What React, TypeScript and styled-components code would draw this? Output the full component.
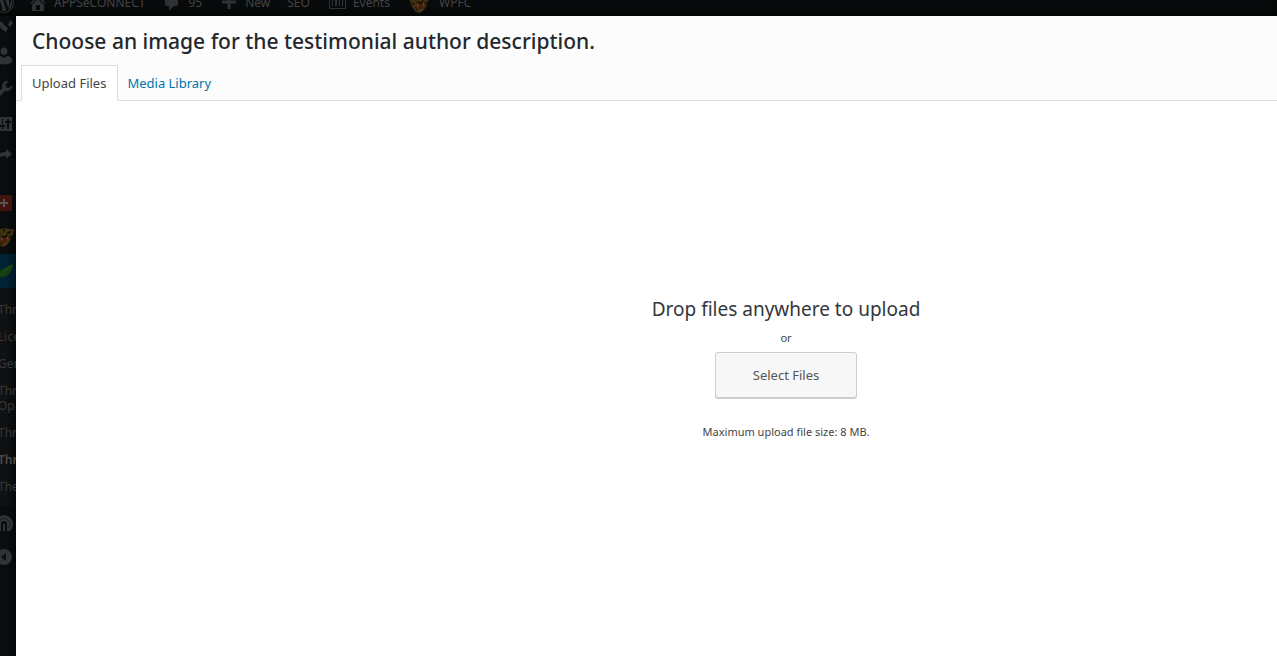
import React from "react";
import styled, { createGlobalStyle, css } from "styled-components";

const GlobalStyle = createGlobalStyle`
  * { box-sizing: border-box; }
  html, body { margin: 0; height: 100%; }
  #root { height: 100%; }
  body {
    background: #090b0c;
    color: #444;
    font-family: "Segoe UI", "Noto Sans", sans-serif;
    font-size: 13px;
    line-height: 20px;
  }
`;

const Page = styled.div`
  display: grid;
  grid-template-rows: 16px minmax(0, 1fr);
  height: 100vh;
  min-height: 600px;
  overflow: hidden;
`;

const AdminBar = styled.nav`
  display: flex;
  align-items: flex-end;
  height: 16px;
  overflow: hidden;
  background: #090b0c;
  box-shadow: inset 0 -5px 6px #050606;
`;

const BarLink = styled.a<{ $gap?: number }>`
  display: flex;
  flex: none;
  align-items: center;
  gap: 6px;
  height: 26px;
  margin-right: ${(p) => p.$gap ?? 17}px;
  color: #434546;
  font-size: 12px;
  line-height: 26px;
  text-decoration: none;
  white-space: nowrap;
  svg { flex: none; color: #2f3132; }
`;

const Crop = styled.span`
  display: flex;
  justify-content: flex-end;
  width: 14px;
`;

const Body = styled.div`
  display: grid;
  grid-template-columns: 16px minmax(0, 1fr);
  min-height: 0;
`;

const Sidebar = styled.nav`
  overflow: hidden;
  background: linear-gradient(to right, #0a0c0d 40%, #050607);
`;

const MenuLink = styled.a<{ $tall?: number; $active?: boolean }>`
  display: flex;
  align-items: center;
  justify-content: flex-end;
  height: ${(p) => p.$tall ?? 34}px;
  padding-right: 2px;
  color: #303233;
  background: ${(p) => (p.$active ? "linear-gradient(to right, #002235 40%, #001522)" : "none")};
  svg { flex: none; }
`;

const Separator = styled.hr`
  height: 17px;
  margin: 0;
  border: 0;
`;

const Submenu = styled.div`
  display: flex;
  flex-direction: column;
  gap: 12px;
  margin-left: -2px;
  padding: 14px 0 12px;
  background: linear-gradient(to right, #0f1112 40%, #070809);
`;

const SubLink = styled.a<{ $current?: boolean }>`
  color: ${(p) => (p.$current ? "#4c4c4c" : "#363839")};
  font-size: 12px;
  font-weight: ${(p) => (p.$current ? 600 : 400)};
  line-height: 15px;
  text-decoration: none;
  white-space: pre;
`;

const Modal = styled.section`
  display: flex;
  flex-direction: column;
  min-width: 0;
  background: #fff;
`;

const Header = styled.header`
  background: #fcfcfc;
  border-bottom: 1px solid #ddd;
`;

const Title = styled.h1`
  margin: 0;
  padding: 2px 16px 0;
  color: #23282d;
  font-size: 21px;
  font-weight: 500;
  line-height: 47px;
`;

const Tabs = styled.div`
  display: flex;
  height: 35px;
  padding-left: 5px;
`;

const Tab = styled.button<{ $active?: boolean }>`
  height: 36px;
  padding: 0 9px;
  border: 0;
  background: transparent;
  color: #0073aa;
  font: inherit;
  line-height: 18px;
  cursor: pointer;
  ${(p) =>
    p.$active &&
    css`
      padding: 0 11px 0 10px;
      border: 1px solid #ddd;
      border-bottom-color: #fff;
      background: #fff;
      color: #444;
    `}
`;

const Uploader = styled.main`
  display: flex;
  flex: 1;
  flex-direction: column;
  align-items: center;
  padding: 194px 0 0 279px;
`;

const DropTitle = styled.h2`
  margin: 0;
  color: #32373c;
  font-size: 19px;
  font-weight: 400;
  line-height: 28px;
`;

const Note = styled.p`
  margin: 0;
  font-size: 11px;
  line-height: 18px;
`;

const OrNote = styled(Note)`
  margin: 6px 0 5px;
`;

const SelectButton = styled.button`
  width: 142px;
  height: 46px;
  margin-bottom: 25px;
  padding: 0 0 1px;
  border: 1px solid #ccc;
  border-radius: 3px;
  background: #f7f7f7;
  box-shadow: 0 1px 0 #ccc;
  color: #555;
  font: inherit;
  cursor: pointer;
`;

const Svg = ({ size = 20, children }: { size?: number; children: React.ReactNode }) => (
  <svg width={size} height={size} viewBox="0 0 20 20" fill="currentColor" aria-hidden="true">
    {children}
  </svg>
);

const Tiger = ({ size = 20 }: { size?: number }) => (
  <Svg size={size}>
    <path fill="#3f3010" d="M0 3l3-2 4 1 4-1 4 1 5 0-1 5-2 3-1 4-3 4-3 2-4-1-4-5-2-5z" />
    <path fill="#120e08" d="M2 3l5 3-3 1zM18 3l-6 3 4 1zM9 2l1 4 1-4zM1 9l4 2-2 1zM18 8l-4 2 2 1zM6 8l3 1 2 0 3-2-1 3-4 1zM5 13l3 5-2-1z" />
    <path fill="#54150f" d="M8 12l5-2-1 5-2 2-2-2z" />
    <path fill="#5b5240" d="M7 11l2 1-1 2zM13 9l1 2-1 3zM8 15l2 2 2-1-1 2z" />
  </Svg>
);

const WordPress = () => (
  <Svg>
    <path
      fillRule="evenodd"
      d="M20 10A10 10 0 1 1 0 10a10 10 0 0 1 20 0zM10 1a9 9 0 1 0 0 18 9 9 0 0 0 0-18zM2 10c0-1.200.3-2.300.7-3.300l3.900 10.500A8 8 0 0 1 2 10zm8 8c-.8 0-1.600-.1-2.300-.3L10 10.700l2.500 6.800c-.8.300-1.600.5-2.500.5zm1.200-11.700h1.300c.4-.1.400-.8-.1-.7-2.100.1-3.100.1-4.600 0-.5 0-.5.700-.1.700h1.200l1.300 3.600-1.900 5.500L5.500 6.300h1c.5-.1.500-.8 0-.7-1 .1-1.800.1-2.800 0a8 8 0 0 1 11.700-1.500c-1 .1-1.600.9-1.400 1.900.3 1.100 1.500 2 1.400 3.700 0 1.500-.7 3-1.200 5.200zm6-.1A8 8 0 0 1 14 16.900l2.500-7.100c.4-1.200.6-2.500.7-3.600z"
    />
  </Svg>
);

const Home = () => (
  <Svg>
    <path d="M16 8.500l1.500 1.600-1 1L10 4.600l-6.500 6.500-1-1L10 2.600l3 2.900V3h3z" />
    <path fillRule="evenodd" d="M10 6l6 6v5.500c0 .3-.2.500-.5.500h-11a.5.5 0 0 1-.5-.5V12zM12 17v-5H8v5z" />
  </Svg>
);

const App = () => (
  <Page>
    <GlobalStyle />
    <AdminBar aria-label="Admin bar">
      <BarLink href="#" $gap={14} aria-label="WordPress">
        <Crop>
          <WordPress />
        </Crop>
      </BarLink>
      <BarLink href="#"><Home />APPSeCONNECT</BarLink>
      <BarLink href="#">
        <Svg><path d="M5 2h9c1.100 0 2 .9 2 2v7c0 1.100-.9 2-2 2h-2l-5 5v-5H5c-1.100 0-2-.9-2-2V4c0-1.100.9-2 2-2z" /></Svg>
        95
      </BarLink>
      <BarLink href="#">
        <Svg><path d="M17 7.500v3h-5.500V16h-3v-5.500H3v-3h5.500V2h3v5.500z" /></Svg>
        New
      </BarLink>
      <BarLink href="#">SEO</BarLink>
      <BarLink href="#" $gap={20}>
        <Svg><path fillRule="evenodd" d="M2 1h17v15H2zM3 3v12h15V3zm2 2h1v8H5zm3 0h2v8H8zm4 0h1v8h-1zm3 0h1v8h-1z" /></Svg>
        Events
      </BarLink>
      <BarLink href="#"><Tiger />&nbsp;WPFC</BarLink>
    </AdminBar>
    <Body>
      <Sidebar aria-label="Admin menu">
        <MenuLink href="#" $tall={23} aria-label="Posts">
          <Svg><path d="M16 2l3 3-3 4-2-2zM4 3l4 1 3 4 3 2-2 4c-2-1-4-2-6-5z" /></Svg>
        </MenuLink>
        <MenuLink href="#" aria-label="Users">
          <Svg><path d="M10 9.300c-2 0-3.500-1.900-3.500-4.200S8 1.500 10 1.500s3.500 1.300 3.500 3.600S12 9.300 10 9.300zM7 10l3 2 3-2c3 0 5 2 5 4.500V16c-2 2-5 2.500-8 2.500S4 18 2 16v-1.500C2 12 4 10 7 10z" /></Svg>
        </MenuLink>
        <MenuLink href="#" aria-label="Tools">
          <Svg><path d="M16.700 9.600c-1.500 1.500-3.700 1.900-5.500 1.200L4.800 17.200a2 2 0 0 1-2.800 0 2 2 0 0 1 0-2.800L8.400 8c-.7-1.900-.3-4 1.200-5.500 1.400-1.400 3.400-1.800 5.200-1.300l-3.300 3.400.5 3 3 .5L18.300 5c.3 1.600-.2 3.300-1.600 4.600z" /></Svg>
        </MenuLink>
        <MenuLink href="#" aria-label="Settings">
          <Svg><path fillRule="evenodd" d="M2 3h16v14H2zM8 5v6H6v2h2v2h1v-2h2v-2H9V5zm5 0v2h-2v2h2v6h2V9h2V7h-2V5z" /></Svg>
        </MenuLink>
        <MenuLink href="#" $tall={28} aria-label="Share">
          <Svg><path d="M12 4l6 5-6 5v-3C7 11 4 12 1 16c0-6 5-9 11-9z" /></Svg>
        </MenuLink>
        <Separator />
        <MenuLink href="#" aria-label="Add-ons">
          <Svg>
            <rect x="2" y="2" width="16" height="16" rx="2" fill="#43140f" />
            <path d="M9 6h2v3h3v2h-3v3H9v-3H6V9h3z" fill="#555" />
          </Svg>
        </MenuLink>
        <MenuLink href="#" aria-label="Cache"><Tiger /></MenuLink>
        <MenuLink href="#" $active aria-label="Thrive">
          <Svg><path fill="#173d10" d="M1 17c1-7 7-9 18-14-1 9-7 15-15 13z" /><path stroke="#24551a" fill="none" d="M2 17Q9 12 18 4" /></Svg>
        </MenuLink>
        <Submenu>
          <SubLink href="#">Thr</SubLink>
          <SubLink href="#">Lice</SubLink>
          <SubLink href="#">Gen</SubLink>
          <SubLink href="#">{"Thr\nOp"}</SubLink>
          <SubLink href="#">Thr</SubLink>
          <SubLink href="#" $current>Thr</SubLink>
          <SubLink href="#">The</SubLink>
        </Submenu>
        <MenuLink href="#" aria-label="Broadcast">
          <Svg>
            <path d="M4 18A9 9 0 1 1 16 18l-3 0V11a3 3 0 0 0-6 0v7z" />
            <path fill="none" stroke="#1b1d1e" d="M5 15a6 6 0 1 1 10 0" />
            <path d="M9 11h2v7H9z" />
          </Svg>
        </MenuLink>
        <MenuLink href="#" aria-label="Collapse menu">
          <Svg><path fillRule="evenodd" d="M10 2a8 8 0 1 1 0 16 8 8 0 0 1 0-16zm2 4l-5 4 5 4z" /></Svg>
        </MenuLink>
      </Sidebar>
      <Modal role="dialog" aria-labelledby="dialog-title">
        <Header>
          <Title id="dialog-title">Choose an image for the testimonial author description.</Title>
          <Tabs role="tablist">
            <Tab role="tab" aria-selected="true" $active>Upload Files</Tab>
            <Tab role="tab" aria-selected="false">Media Library</Tab>
          </Tabs>
        </Header>
        <Uploader>
          <DropTitle>Drop files anywhere to upload</DropTitle>
          <OrNote>or</OrNote>
          <SelectButton>Select Files</SelectButton>
          <Note>Maximum upload file size: 8 MB.</Note>
        </Uploader>
      </Modal>
    </Body>
  </Page>
);

export default App;
